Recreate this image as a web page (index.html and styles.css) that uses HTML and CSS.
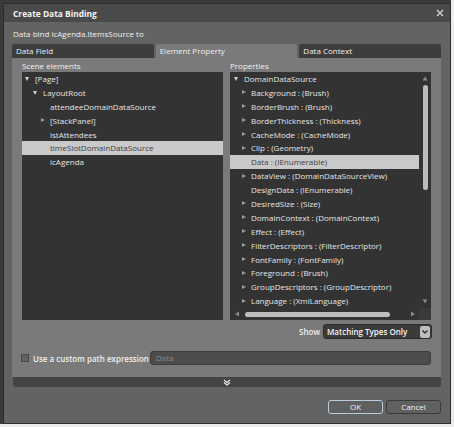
FILE: index.html
```html
<!DOCTYPE html>
<html>
<head>
<meta charset="utf-8">
<link rel="stylesheet" href="styles.css">
</head>
<body>
<div class="desk">
  <div class="dialog">
    <div class="titlebar">
      <span class="title">Create Data Binding</span>
      <svg class="close" width="8" height="8" viewBox="0 0 8 8"><path d="M1 1L7 7M7 1L1 7" stroke="#d0d0d0" stroke-width="1.4"/></svg>
    </div>
    <div class="body">
      <div class="bindlabel">Data bind icAgenda.ItemsSource to</div>
      <div class="tabs">
        <div class="tab">Data Field</div>
        <div class="tab active">Element Property</div>
        <div class="tab">Data Context</div>
      </div>
      <div class="panel">
        <div class="cols">
          <div class="col">
            <div class="collabel">Scene elements</div>
            <div class="list left">
              <div class="row l0"><span class="arr down"></span>[Page]</div>
              <div class="row l1"><span class="arr down"></span>LayoutRoot</div>
              <div class="row l2"><span class="arr"></span>attendeeDomainDataSource</div>
              <div class="row l2"><span class="arr right"></span>[StackPanel]</div>
              <div class="row l2"><span class="arr"></span>lstAttendees</div>
              <div class="row l2 sel"><span class="arr"></span>timeSlotDomainDataSource</div>
              <div class="row l2"><span class="arr"></span>icAgenda</div>
            </div>
          </div>
          <div class="col">
            <div class="collabel">Properties</div>
            <div class="list right-list">
              <div class="rows">
                <div class="row r0"><span class="arr down"></span>DomainDataSource</div>
                <div class="row r1"><span class="arr right"></span>Background : (Brush)</div>
                <div class="row r1"><span class="arr right"></span>BorderBrush : (Brush)</div>
                <div class="row r1"><span class="arr right"></span>BorderThickness : (Thickness)</div>
                <div class="row r1"><span class="arr right"></span>CacheMode : (CacheMode)</div>
                <div class="row r1"><span class="arr right"></span>Clip : (Geometry)</div>
                <div class="row r1 sel"><span class="arr"></span>Data : (IEnumerable)</div>
                <div class="row r1"><span class="arr right"></span>DataView : (DomainDataSourceView)</div>
                <div class="row r1"><span class="arr"></span>DesignData : (IEnumerable)</div>
                <div class="row r1"><span class="arr right"></span>DesiredSize : (Size)</div>
                <div class="row r1"><span class="arr right"></span>DomainContext : (DomainContext)</div>
                <div class="row r1"><span class="arr right"></span>Effect : (Effect)</div>
                <div class="row r1"><span class="arr right"></span>FilterDescriptors : (FilterDescriptor)</div>
                <div class="row r1"><span class="arr right"></span>FontFamily : (FontFamily)</div>
                <div class="row r1"><span class="arr right"></span>Foreground : (Brush)</div>
                <div class="row r1"><span class="arr right"></span>GroupDescriptors : (GroupDescriptor)</div>
                <div class="row r1"><span class="arr right"></span>Language : (XmlLanguage)</div>
              </div>
              <div class="vscroll">
                <svg width="12" height="236" viewBox="0 0 12 236">
                  <path d="M3.5 8.5L6 4.5L8.5 8.5Z" fill="#8a8a8a"/>
                  <rect x="4" y="13" width="5" height="105" rx="2.5" fill="#bdbdbd"/>
                  <path d="M3.5 227.5L6 231.5L8.5 227.5Z" fill="#8a8a8a"/>
                </svg>
              </div>
              <div class="hscroll">
                <svg width="189" height="12" viewBox="0 0 189 12">
                  <path d="M9 3.5L5 6L9 8.5Z" fill="#8a8a8a"/>
                  <rect x="15" y="4" width="145" height="5" rx="2.5" fill="#bdbdbd"/>
                  <path d="M181 3.5L185 6L181 8.5Z" fill="#8a8a8a"/>
                </svg>
              </div>
              <div class="corner"></div>
            </div>
          </div>
        </div>
        <div class="showrow">
          <span class="showlabel">Show</span>
          <div class="dropdown">
            <span>Matching Types Only</span>
            <span class="ddbtn"><svg width="8" height="6" viewBox="0 0 8 6"><path d="M1.5 1.5L4 4L6.5 1.5" stroke="#333" stroke-width="1.5" fill="none"/></svg></span>
          </div>
        </div>
        <div class="pathrow">
          <span class="check"></span>
          <span class="pathlabel">Use a custom path expression</span>
          <div class="pathinput">Data</div>
        </div>
      </div>
      <div class="expander">
        <svg width="8" height="7" viewBox="0 0 8 7"><path d="M1 1L4 3.5L7 1M1 3.5L4 6L7 3.5" stroke="#e8e8e8" stroke-width="1.2" fill="none"/></svg>
      </div>
      <div class="buttons">
        <div class="btn ok">OK</div>
        <div class="btn">Cancel</div>
      </div>
    </div>
  </div>
</div>
</body>
</html>
```
FILE: styles.css
```css
* { box-sizing: border-box; }
html, body { margin: 0; padding: 0; }
body {
  background: #ececec;
  font-family: "Open Sans", "Noto Sans", sans-serif;
  font-size: 8px;
  color: #ececec;
}
.desk {
  width: 451px;
  height: 424px;
  background: #3a3a3a;
  padding: 3px 0 0 3px;
}
.dialog {
  width: 448px;
  height: 421px;
  background: #636363;
  border: 1px solid #2e2e2e;
  display: flex;
  flex-direction: column;
}
.titlebar {
  height: 18px;
  background: #4a4a4a;
  display: flex;
  align-items: center;
  justify-content: space-between;
  padding: 0 6px 0 9px;
}
.title {
  font-weight: 700;
  font-size: 8.4px;
  color: #f2f2f2;
}
.close { display: block; }
.body {
  flex: 1;
  display: flex;
  flex-direction: column;
  padding: 0 9px 0 8px;
}
.bindlabel {
  margin-top: 6px;
  height: 16px;
  line-height: 12px;
  padding-left: 1px;
  color: #f0f0f0;
}
.tabs {
  display: flex;
  gap: 2px;
  height: 14px;
}
.tab {
  flex: 1;
  background: #3d3d3d;
  border-radius: 2px 2px 0 0;
  line-height: 14px;
  padding-left: 4px;
  color: #f0f0f0;
}
.tab.active { background: #7a7a7a; }
.panel {
  background: #7a7a7a;
  height: 319px;
  padding: 0 10px;
}
.cols {
  display: grid;
  grid-template-columns: 201px 201px;
  gap: 7px;
}
.collabel {
  height: 14px;
  line-height: 15px;
  color: #f0f0f0;
}
.list {
  background: #333333;
  height: 248px;
}
.row {
  height: 13.9px;
  line-height: 13.9px;
  white-space: nowrap;
  color: #e6e6e6;
  display: flex;
  align-items: center;
}
.row.sel {
  background: #c9c9c9;
  color: #404040;
}
.arr {
  width: 11px;
  height: 13px;
  flex: none;
  position: relative;
}
.arr.down::before {
  content: "";
  position: absolute;
  left: 1px;
  top: 5px;
  border-left: 2.5px solid transparent;
  border-right: 2.5px solid transparent;
  border-top: 4px solid #cfcfcf;
}
.arr.right::before {
  content: "";
  position: absolute;
  left: 2px;
  top: 4px;
  border-top: 2.5px solid transparent;
  border-bottom: 2.5px solid transparent;
  border-left: 4px solid #9a9a9a;
}
.l0 { padding-left: 2px; }
.l1 { padding-left: 10px; }
.l2 { padding-left: 17px; }
.r0 { padding-left: 3px; }
.r1 { padding-left: 10px; }
.right-list {
  display: grid;
  grid-template-columns: 189px 12px;
  grid-template-rows: 236px 12px;
}
.rows { overflow: hidden; }
.vscroll, .hscroll { line-height: 0; }
.vscroll svg, .hscroll svg { display: block; }
.corner { background: #3a3a3a; }
.showrow {
  display: flex;
  justify-content: flex-end;
  align-items: center;
  gap: 3px;
  margin-top: 4px;
  height: 15px;
  margin-right: -1px;
}
.showlabel {
  font-weight: 600;
  color: #f0f0f0;
}
.dropdown {
  width: 109px;
  height: 15px;
  background: #3b3b3b;
  border: 1px solid #2c2c2c;
  border-radius: 3px;
  display: flex;
  align-items: center;
  justify-content: space-between;
  padding: 0 1px 0 3px;
  font-weight: 600;
  color: #f4f4f4;
}
.ddbtn {
  width: 10px;
  height: 12px;
  background: #bdbdbd;
  border-radius: 2px;
  display: flex;
  align-items: center;
  justify-content: center;
}
.ddbtn svg { display: block; }
.pathrow {
  display: flex;
  align-items: center;
  margin-top: 12px;
  height: 14px;
}
.check {
  width: 8px;
  height: 8px;
  background: #626262;
  border: 1px solid #4a4a4a;
  margin-left: -1px;
  flex: none;
}
.pathlabel {
  margin-left: 4px;
  font-weight: 600;
  color: #f0f0f0;
  width: 117px;
  flex: none;
}
.pathinput {
  flex: 1;
  height: 14px;
  background: #4c4c4c;
  border: 1px solid #3c3c3c;
  border-radius: 3px;
  line-height: 12px;
  padding-left: 5px;
  color: #8c8c8c;
}
.expander {
  height: 10px;
  background: #444444;
  border-radius: 0 0 3px 3px;
  margin-left: 1px;
  display: flex;
  justify-content: center;
  align-items: center;
}
.expander svg { display: block; }
.buttons {
  display: flex;
  justify-content: flex-end;
  gap: 3px;
  margin-top: 13px;
}
.btn {
  width: 55px;
  height: 14px;
  background: #606060;
  border: 1px solid #3a3a3a;
  border-radius: 3px;
  text-align: center;
  line-height: 12px;
  color: #f2f2f2;
}
.btn.ok {
  border-color: #b8cde0;
  width: 55px;
}
```
